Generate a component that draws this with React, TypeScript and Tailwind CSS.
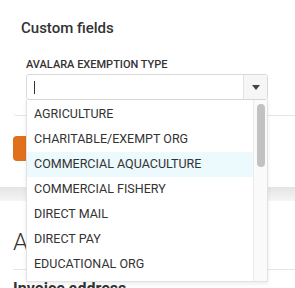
import { useState } from 'react'

const options = [
  'AGRICULTURE',
  'CHARITABLE/EXEMPT ORG',
  'COMMERCIAL AQUACULTURE',
  'COMMERCIAL FISHERY',
  'DIRECT MAIL',
  'DIRECT PAY',
  'EDUCATIONAL ORG',
  'FEDERAL GOV',
  'FOREIGN DIPLOMAT',
]

function ExemptionSelect() {
  const [active] = useState(2)

  return (
    <div className="relative w-[242px]">
      <div className="flex h-[26px] rounded-[3px] border border-[#d9d9d9] bg-white">
        <div className="flex flex-1 items-center pl-[7px]">
          <span className="h-[13px] w-px bg-[#333]" />
        </div>
        <div className="flex w-[24px] items-center justify-center rounded-r-[3px] border-l border-[#e3e3e3] bg-[#f6f6f6]">
          <svg width="8" height="5" viewBox="0 0 8 5">
            <path d="M0 0h8L4 5z" fill="#444" />
          </svg>
        </div>
      </div>

      <div className="absolute left-0 right-0 top-full z-10 flex h-[182px] overflow-hidden border border-t-0 border-[#e2e2e2] bg-white shadow-[0_2px_4px_rgba(0,0,0,0.08)]">
        <ul className="flex-1 pt-[2px]">
          {options.map((opt, i) => (
            <li
              key={opt}
              className={`flex h-[25px] items-center pl-[7px] text-[12.5px] text-[#333] ${
                i === active ? 'bg-[#ecf9fd]' : ''
              }`}
            >
              {opt}
            </li>
          ))}
        </ul>
        <div className="w-[14px] border-l border-[#ececec] bg-[#fafafa] pt-[4px]">
          <div className="mx-auto h-[63px] w-[8px] rounded-full bg-[#c2c2c2]" />
        </div>
      </div>
    </div>
  )
}

export default function App() {
  return (
    <div className="min-h-[288px] bg-white font-['Roboto',sans-serif] text-[#333]">
      <div className="pb-[26px] pl-[13px]">
        <div className="rounded-bl-[4px] border-b border-[#e5e5e5] pb-[15px] pt-[18px]">
          <h2 className="pl-[8px] text-[15px] font-medium leading-[20px] text-[#333]">Custom fields</h2>
          <div className="mt-[20px] pl-[13px]">
            <label className="block text-[11px] font-medium leading-[14px] text-[#333]">
              AVALARA EXEMPTION TYPE
            </label>
            <div className="mt-[2px]">
              <ExemptionSelect />
            </div>
          </div>
        </div>
        <button className="mt-[20px] h-[25px] w-[110px] rounded-[4px] bg-[#e0711a] text-[13px] font-medium text-white">
          Save
        </button>
      </div>

      <div className="h-[14px] bg-gradient-to-b from-[#e4e4e4] to-[#f5f5f5]" />

      <div className="pl-[13px] pt-[26px]">
        <div className="border-b border-[#e5e5e5] pb-[12px]">
          <h2 className="text-[24px] font-light leading-[30px] text-[#333]">Addresses</h2>
        </div>
        <h3 className="mt-[9px] text-[16px] font-bold leading-[20px] text-[#333]">Invoice address</h3>
      </div>
    </div>
  )
}
